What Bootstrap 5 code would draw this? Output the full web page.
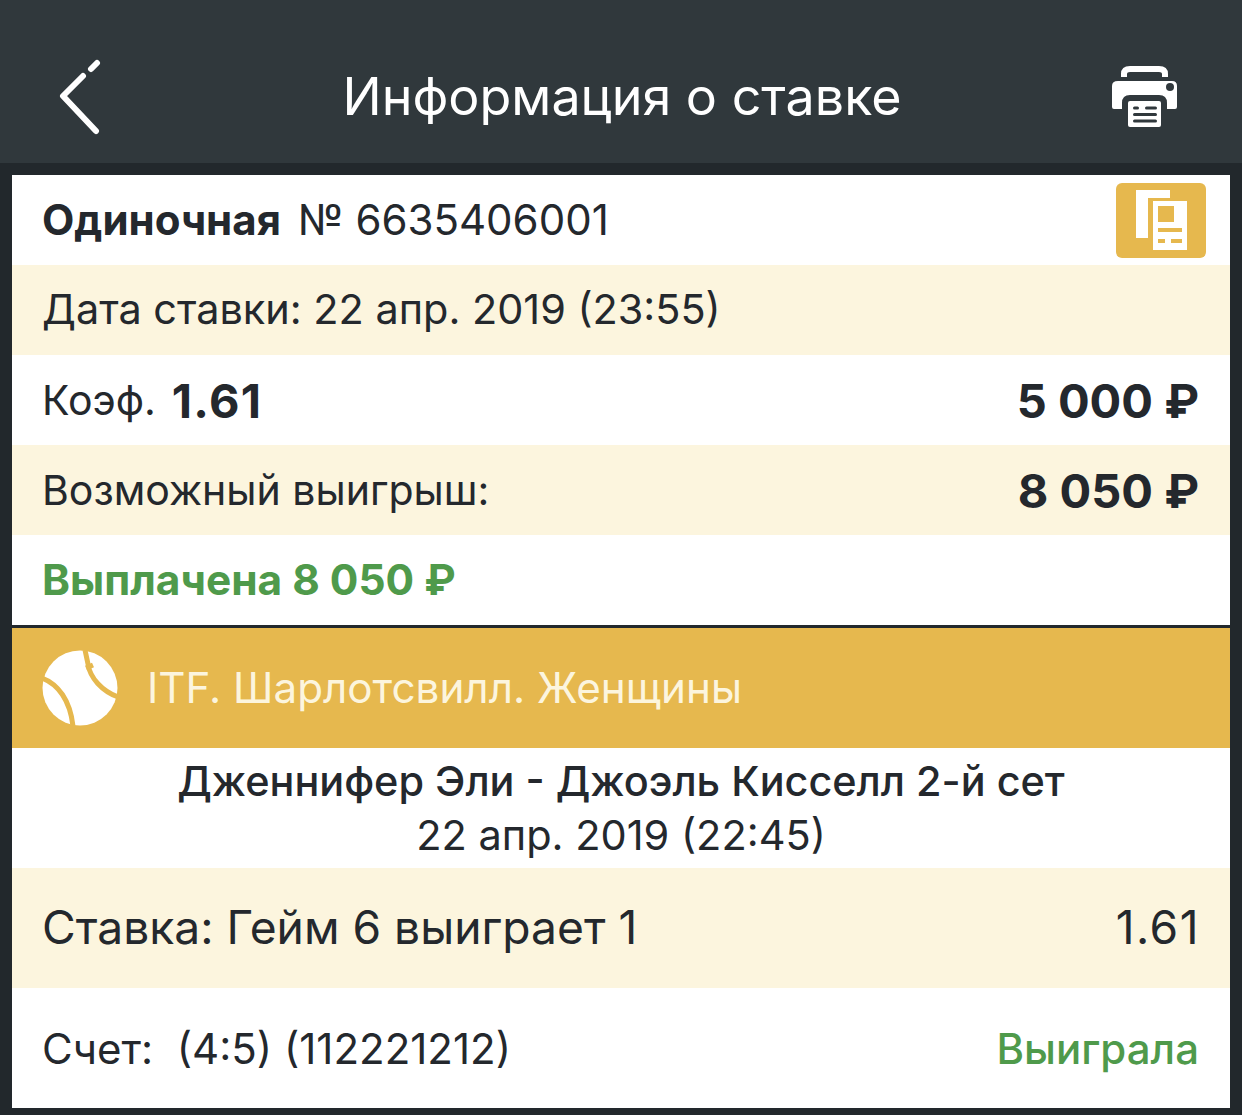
<!doctype html>
<html lang="ru">
<head>
<meta charset="utf-8">
<title>Информация о ставке</title>
<link href="https://cdn.jsdelivr.net/npm/bootstrap@5.3.0/dist/css/bootstrap.min.css" rel="stylesheet">
<style>
html,body{height:1115px;overflow:hidden}
body{background:#22282c;font-family:Inter,"Liberation Sans",sans-serif;color:#24282d;padding-bottom:7px}
.topbar{height:163px;background:#30383c;color:#fff;padding:31px 64px 0 58px}
.topbar-side{flex:1 1 0}
.topbar-title{font-size:52px;line-height:1;margin-left:8px}
.sheet{margin:12px 12px 0;background:#fff}
.line{height:90px;padding:0 31px 0 30px}
.cream{background:#fcf5de}
.txt-lg{font-size:41px;line-height:1}
.txt-date{font-size:41.4px;line-height:1}
.txt-num{font-size:42px;line-height:1}
.txt-strong{font-size:42px;font-weight:700;margin-right:5px}
.num-strong{font-size:47px;font-weight:700;line-height:1}
.coef{letter-spacing:1.3px}
.paid{color:#4f9a4b;font-size:42.4px;font-weight:700}
.divider{height:3px;background:#22282c}
.league{height:120px;background:#e6b84e;color:#fcf5de;padding:0 31px 0 30px;font-size:42.2px;gap:29px}
.match{height:120px;font-size:41.5px;line-height:54px}
.match-name{font-weight:500;font-size:41.4px}
.bet{height:120px;padding:0 31px 0 30px;font-size:46.2px}
.bet-num{letter-spacing:1.5px;margin-right:-1px}
.score{height:120px;padding:0 31px 0 30px;font-size:42px}
.won{color:#4f9a4b;font-weight:500}
.copybtn{width:90px;height:75px;background:#e6b84e;border-radius:6px;margin-right:-7px}
</style>
</head>
<body>
<header class="topbar d-flex align-items-center">
  <div class="topbar-side d-flex">
  <svg width="44" height="76" viewBox="0 0 44 76" fill="none" stroke="#fff" stroke-width="6" stroke-linecap="round" stroke-linejoin="round" aria-label="Назад">
    <path d="M38 72 L5 37 L25 17"/><path d="M33 10 L39 4"/>
  </svg>
  </div>
  <div class="topbar-title">Информация о ставке</div>
  <div class="topbar-side d-flex justify-content-end">
  <svg width="66" height="62" viewBox="0 0 66 62" aria-label="Печать">
    <path fill="none" stroke="#fff" stroke-width="6" d="M12 11 V8 Q12 3 18 3 H47 Q53 3 53 8 V11"/>
    <path fill="#fff" d="M6 15 H60 Q65 15 65 20 V41 Q65 43 63 43 H55 V37 Q55 29 47 29 H18 Q10 29 10 37 V43 H2 Q0 43 0 41 V20 Q0 15 6 15 Z"/>
    <circle cx="58" cy="21" r="4" fill="#30383c"/>
    <rect x="16" y="35" width="33" height="26" rx="2" fill="#fff"/>
    <g fill="#30383c"><rect x="21" y="40.500" width="6" height="3" rx="1.500"/><rect x="33" y="40.500" width="12" height="3" rx="1.500"/><rect x="21" y="47" width="24" height="3" rx="1.500"/><rect x="21" y="53.500" width="24" height="3" rx="1.500"/></g>
  </svg>
  </div>
</header>
<main class="sheet">
  <div class="line d-flex align-items-center justify-content-between">
    <div class="txt-num"><span class="txt-strong">Одиночная</span> № 6635406001</div>
    <div class="copybtn d-flex align-items-center justify-content-center">
      <svg width="51" height="60" viewBox="0 0 51 60" aria-label="Копия">
        <path fill="#fff" d="M0 0 H34 V8 H12 V48 H0 Z"/>
        <path fill="#fff" d="M17 11 H51 V60 H17 Z"/>
        <rect x="22" y="16" width="16" height="16" fill="#e6b84e"/>
        <rect x="22" y="38" width="24" height="4" fill="#e6b84e"/>
        <rect x="22" y="49" width="7" height="4" fill="#e6b84e"/>
        <rect x="35" y="49" width="11" height="4" fill="#e6b84e"/>
      </svg>
    </div>
  </div>
  <div class="line cream d-flex align-items-center txt-date">Дата ставки: 22 апр. 2019 (23:55)</div>
  <div class="line d-flex align-items-center justify-content-between">
    <div class="d-flex align-items-center txt-lg">Коэф.<span class="num-strong coef ms-3">1.61</span></div>
    <div class="num-strong">5 000 ₽</div>
  </div>
  <div class="line cream d-flex align-items-center justify-content-between">
    <div class="txt-lg">Возможный выигрыш:</div>
    <div class="num-strong">8 050 ₽</div>
  </div>
  <div class="line d-flex align-items-center paid">Выплачена 8 050 ₽</div>
  <div class="divider"></div>
  <div class="league d-flex align-items-center">
    <svg width="76" height="76" viewBox="0 0 76 76" aria-label="Теннис" class="flex-shrink-0">
      <circle cx="38" cy="38" r="37.5" fill="#fff"/>
      <g fill="none" stroke="#e6b84e" stroke-width="5">
        <path d="M0 28 C16 34 28 50 31 76"/>
        <path d="M43 0 L46 14 C48 28 60 41 76 47"/>
        <path d="M44 18 L51 15"/>
      </g>
    </svg>
    <span>ITF. Шарлотсвилл. Женщины</span>
  </div>
  <div class="match d-flex flex-column justify-content-center text-center">
    <div class="match-name">Дженнифер Эли - Джоэль Кисселл 2-й сет</div>
    <div>22 апр. 2019 (22:45)</div>
  </div>
  <div class="bet cream d-flex align-items-center justify-content-between">
    <div>Ставка: Гейм 6 выиграет 1</div>
    <div class="bet-num">1.61</div>
  </div>
  <div class="score d-flex align-items-center justify-content-between">
    <div>Счет:&nbsp; (4:5) (112221212)</div>
    <div class="won">Выиграла</div>
  </div>
</main>
</body>
</html>
